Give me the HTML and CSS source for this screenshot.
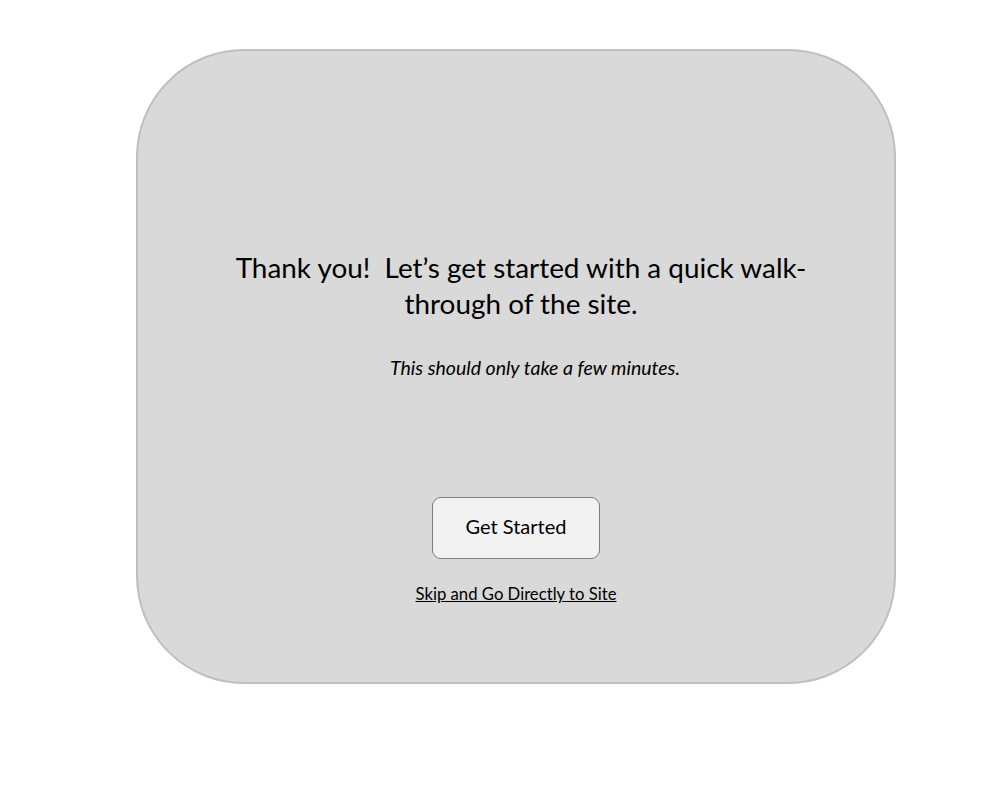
FILE: index.html
```html
<!DOCTYPE html>
<html lang="en">
<head>
<meta charset="utf-8">
<title>Welcome</title>
<link rel="stylesheet" href="styles.css">
</head>
<body>
  <main class="card">
    <h1 class="title">Thank you!&nbsp; Let’s get started with a quick walk-<br>through of the site.</h1>
    <p class="subtitle">This should only take a few minutes.</p>
    <button class="start-btn" type="button">Get Started</button>
    <a class="skip-link" href="#">Skip and Go Directly to Site</a>
  </main>
</body>
</html>
```
FILE: styles.css
```css
html, body {
  margin: 0;
  padding: 0;
  background: #ffffff;
}

body {
  font-family: "Lato", "Open Sans", "Liberation Sans", sans-serif;
  color: #000;
}

.card {
  box-sizing: border-box;
  width: 760px;
  height: 635px;
  margin: 49px 0 0 136px;
  padding-top: 198px;
  background: #d9d9d9;
  border: 2px solid #bfbfbf;
  border-radius: 108px;
  display: flex;
  flex-direction: column;
  align-items: center;
}

.title {
  margin: 0;
  font-size: 27.9px;
  font-weight: 400;
  line-height: 36px;
  text-align: center;
  padding-left: 10px;
}

.subtitle {
  margin: 35px 0 0 38px;
  font-size: 19.5px;
  font-style: italic;
  line-height: 24px;
}

.start-btn {
  margin-top: 117px;
  width: 168px;
  height: 62px;
  background: #f2f2f2;
  border: 1px solid #7f7f7f;
  border-radius: 9px;
  font-family: inherit;
  font-size: 20px;
  color: #000;
  padding: 0 0 4px;
}

.skip-link {
  margin-top: 25px;
  font-size: 16.7px;
  line-height: 20px;
  color: #000;
  text-decoration: underline;
}
```
